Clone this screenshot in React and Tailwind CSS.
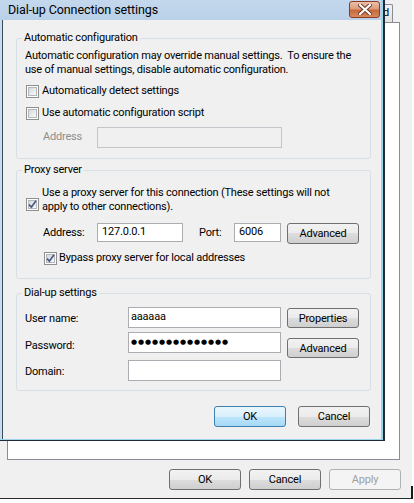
import React from 'react';

// ── Win7 style bits ───────────────────────────────────────────────
function Checkbox({ checked }) {
  return (
    <span className="flex h-[13px] w-[13px] shrink-0 items-center justify-center border border-[#8e8f8f] bg-[#fdfdfd]">
      <span className="flex h-[9px] w-[9px] items-center justify-center border border-[#b4b8bd] bg-[linear-gradient(135deg,#d6d9dd,#f8f8f8)]">
        {checked && (
          <svg width="9" height="9" viewBox="0 0 9 9" className="overflow-visible">
            <path d="M1 4.6 L3.4 7.2 L8 0.8" fill="none" stroke="#4a5a86" strokeWidth="1.7" />
          </svg>
        )}
      </span>
    </span>
  );
}

function Btn({ children, focused, disabled, h = 'h-[21px]' }) {
  const look = focused
    ? 'border-[#3c7fb1] bg-[linear-gradient(#eaf6fd_0%,#d9f0fc_50%,#bee6fd_50%,#a7d9f5_100%)]'
    : disabled
    ? 'border-[#adb2b5] bg-[#f4f4f4] text-[#a0a0a0]'
    : 'border-[#707070] bg-[linear-gradient(#f2f2f2_0%,#ebebeb_50%,#dddddd_50%,#cfcfcf_100%)]';
  return (
    <div className={`flex w-[72px] ${h} shrink-0 items-center justify-center rounded-[3px] border ${look}`}>
      <span className="leading-none">{children}</span>
    </div>
  );
}

function TextBox({ w, h = 'h-[21px]', disabled, children }) {
  return (
    <div
      className={`flex ${w} ${h} shrink-0 items-center border px-[2px] ${
        disabled ? 'border-[#c2c5ca] bg-[#f0f0f0]' : 'border-[#abadb3] bg-white'
      }`}
    >
      {children}
    </div>
  );
}

function CloseButton() {
  return (
    <div className="relative mt-[1px] mr-[1px] ml-auto flex h-[17px] w-[31px] items-center justify-center overflow-hidden rounded-[3px] border border-[#8a3c24] bg-[linear-gradient(#ecc0a8_0%,#dc9c7c_45%,#c8683f_55%,#d88a5c_100%)]">
      <svg width="14" height="11" viewBox="0 0 14 11">
        <path d="M2 1 L12 10 M12 1 L2 10" stroke="#6a3422" strokeWidth="4" strokeLinecap="square" />
        <path d="M2 1 L12 10 M12 1 L2 10" stroke="#ffffff" strokeWidth="2.2" strokeLinecap="square" />
      </svg>
    </div>
  );
}

// ── Dialog in front ───────────────────────────────────────────────
function DialupDialog() {
  return (
    <div className="absolute left-0 top-0 w-[385px] border-r-[2px] border-b border-[#1e2c3a]">
      <div className="flex flex-col border-r-[2px] border-b border-[#9bd3ea]">
        {/* title bar */}
        <div className="flex h-[20px] items-start bg-[linear-gradient(#c4d8ed,#b9d0e8)]">
          <span className="pl-[8px] pt-[2px] text-[12.5px] leading-[16px] tracking-[-0.1px] text-black">Dial-up Connection settings</span>
          <CloseButton />
        </div>

        <div className="bg-[#c9dcef] pl-[2px]">
          <div className="border-l border-[#3b4b5b] bg-[#f0f0f0] pl-[13px] pr-[10px] pt-[10px] pb-[12px]">
            {/* Automatic configuration */}
            <fieldset className="rounded-[3px] border border-[#d5dfe5] px-[8px] pb-[10px]">
              <legend className="-ml-[3px] px-[2px] leading-[16px]">Automatic configuration</legend>
              <p className="mt-[3px] whitespace-nowrap leading-[14px]">
                Automatic configuration may override manual settings.&nbsp; To ensure the
                <br />
                use of manual settings, disable automatic configuration.
              </p>
              <label className="mt-[6px] ml-[1px] flex h-[16px] items-center gap-[3px]">
                <Checkbox />
                <span>Automatically detect settings</span>
              </label>
              <label className="mt-[6px] ml-[1px] flex h-[16px] items-center gap-[3px]">
                <Checkbox />
                <span>Use automatic configuration script</span>
              </label>
              <div className="mt-[6px] ml-[18px] flex items-center">
                <span className="w-[54px] text-[#8d8d8d]">Address</span>
                <TextBox w="w-[185px]" disabled />
              </div>
            </fieldset>

            {/* Proxy server */}
            <fieldset className="mt-[3px] rounded-[3px] border border-[#d5dfe5] px-[8px] pb-[12px]">
              <legend className="-ml-[3px] px-[2px] leading-[16px]">Proxy server</legend>
              <div className="mt-[8px] ml-[1px] flex items-start gap-[3px]">
                <span className="mt-[12px]">
                  <Checkbox checked />
                </span>
                <span className="whitespace-nowrap leading-[14px]">
                  Use a proxy server for this connection (These settings will not
                  <br />
                  apply to other connections).
                </span>
              </div>
              <div className="mt-[9px] ml-[18px] flex items-start">
                <span className="w-[54px] leading-[19px]">Address:</span>
                <TextBox w="w-[86px]" h="h-[19px]">
                  <span className="pl-[2px]">127.0.0.1</span>
                </TextBox>
                <span className="ml-[16px] w-[35px] leading-[19px]">Port:</span>
                <TextBox w="w-[47px]" h="h-[19px]">
                  <span className="pl-[2px]">6006</span>
                </TextBox>
                <div className="ml-[6px]">
                  <Btn>Advanced</Btn>
                </div>
              </div>
              <label className="mt-[6px] ml-[19px] flex h-[16px] items-center gap-[2px]">
                <Checkbox checked />
                <span>Bypass proxy server for local addresses</span>
              </label>
            </fieldset>

            {/* Dial-up settings */}
            <fieldset className="mt-[6px] rounded-[3px] border border-[#d5dfe5] px-[8px] pb-[8px]">
              <legend className="-ml-[3px] px-[2px] leading-[16px]">Dial-up settings</legend>
              <div className="mt-[6px] flex">
                <div className="grid grid-cols-[103px_153px] gap-y-[4px]">
                  <span className="mt-[1px] -mb-[1px] leading-[21px]">User name:</span>
                  <TextBox w="w-[153px]">
                    <span>aaaaaa</span>
                  </TextBox>
                  <span className="mt-[3px] -mb-[3px] leading-[21px]">Password:</span>
                  <TextBox w="w-[153px]">
                    <span className="font-['DejaVu_Sans',sans-serif] text-[7px] leading-none tracking-[0.9px]">●●●●●●●●●●●●●●</span>
                  </TextBox>
                  <span className="mt-[4px] leading-[21px]">Domain:</span>
                  <div className="mt-[3px]">
                    <TextBox w="w-[153px]" />
                  </div>
                </div>
                <div className="ml-[6px] flex flex-col gap-[10px] pt-[1px]">
                  <Btn h="h-[20px]">Properties</Btn>
                  <Btn h="h-[20px]">Advanced</Btn>
                </div>
              </div>
            </fieldset>

            <div className="mt-[15px] mr-[1px] flex justify-end gap-[12px]">
              <Btn focused>OK</Btn>
              <Btn>Cancel</Btn>
            </div>
          </div>
        </div>
      </div>
    </div>
  );
}

// ── Window behind ─────────────────────────────────────────────────
function BackWindow() {
  return (
    <div className="h-[499px] w-[412px] border-b border-[#2a2a2a] bg-[#f0f0f0]">
      <div className="flex justify-end pt-[4px] pr-[19px]">
        <div className="h-[18px] rounded-t-[2px] border border-b-0 border-[#898c95] bg-[linear-gradient(#f3f3f3,#e3e3e3)] pl-[6px] pr-[3px] leading-[16px]">
          Advanced
        </div>
      </div>
      <div className="ml-[7px] h-[438px] w-[393px] border border-[#898c95] bg-white" />
      <div className="mt-[9px] flex justify-end gap-[8px] pr-[11px]">
        <Btn>OK</Btn>
        <Btn>Cancel</Btn>
        <Btn disabled>Apply</Btn>
      </div>
    </div>
  );
}

export default function App() {
  return (
    <div className="relative h-[503px] w-[414px] overflow-hidden bg-white font-['Roboto',sans-serif] text-[11px] tracking-[-0.2px] text-black">
      <BackWindow />
      <div className="absolute left-[411px] top-[486px] h-[13px] w-[2px] bg-[#1a1a1a]" />
      <DialupDialog />
    </div>
  );
}
